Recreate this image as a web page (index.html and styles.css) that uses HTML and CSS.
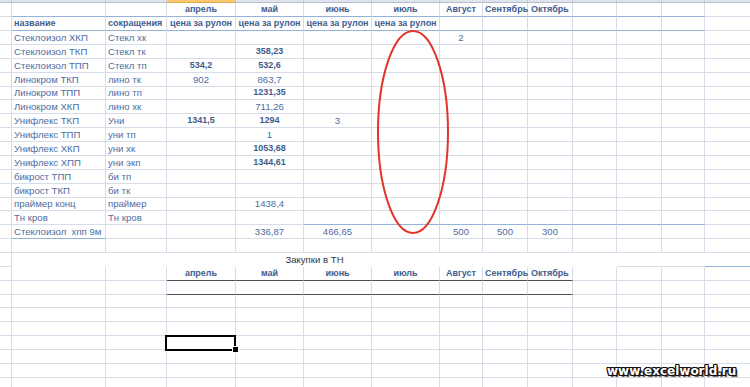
FILE: index.html
```html
<!DOCTYPE html>
<html lang="ru">
<head>
<meta charset="utf-8">
<title>Лист</title>
<link rel="stylesheet" href="styles.css">
</head>
<body>
<div class="sheet">
  <div class="row hdr"><div class="h"></div><div class="h"></div><div class="h"></div><div class="h sel"></div><div class="h"></div><div class="h"></div><div class="h"></div><div class="h"></div><div class="h"></div><div class="h"></div><div class="h"></div><div class="h"></div><div class="h"></div><div class="h"></div></div>

  <div class="row first"><div class="c"></div><div class="c bb"></div><div class="c bb"></div><div class="c bb b m">апрель</div><div class="c bb b m">май</div><div class="c bb b m">июнь</div><div class="c bb b m">июль</div><div class="c bb b m">Август</div><div class="c bb b m">Сентябрь</div><div class="c bb b m">Октябрь</div><div class="c bb"></div><div class="c bb"></div><div class="c bb"></div><div class="c"></div></div>

  <div class="row"><div class="c"></div><div class="c bb b">название</div><div class="c bb b">сокращения</div><div class="c bb b m">цена за рулон</div><div class="c bb b m">цена за рулон</div><div class="c bb b m">цена за рулон</div><div class="c bb b m">цена за рулон</div><div class="c bb"></div><div class="c bb"></div><div class="c bb"></div><div class="c bb"></div><div class="c bb"></div><div class="c bb"></div><div class="c"></div></div>

  <div class="row"><div class="c"></div><div class="c">Стеклоизол ХКП</div><div class="c">Стекл хк</div><div class="c"></div><div class="c"></div><div class="c"></div><div class="c"></div><div class="c m">2</div><div class="c"></div><div class="c"></div><div class="c"></div><div class="c"></div><div class="c"></div><div class="c"></div></div>

  <div class="row"><div class="c"></div><div class="c">Стеклоизол ТКП</div><div class="c">Стекл тк</div><div class="c"></div><div class="c b m">358,23</div><div class="c"></div><div class="c"></div><div class="c"></div><div class="c"></div><div class="c"></div><div class="c"></div><div class="c"></div><div class="c"></div><div class="c"></div></div>

  <div class="row"><div class="c"></div><div class="c">Стеклоизол ТПП</div><div class="c">Стекл тп</div><div class="c b m">534,2</div><div class="c b m">532,6</div><div class="c"></div><div class="c"></div><div class="c"></div><div class="c"></div><div class="c"></div><div class="c"></div><div class="c"></div><div class="c"></div><div class="c"></div></div>

  <div class="row"><div class="c"></div><div class="c">Линокром ТКП</div><div class="c">лино тк</div><div class="c m">902</div><div class="c m">863,7</div><div class="c"></div><div class="c"></div><div class="c"></div><div class="c"></div><div class="c"></div><div class="c"></div><div class="c"></div><div class="c"></div><div class="c"></div></div>

  <div class="row"><div class="c"></div><div class="c">Линокром ТПП</div><div class="c">лино тп</div><div class="c"></div><div class="c b m">1231,35</div><div class="c"></div><div class="c"></div><div class="c"></div><div class="c"></div><div class="c"></div><div class="c"></div><div class="c"></div><div class="c"></div><div class="c"></div></div>

  <div class="row"><div class="c"></div><div class="c">Линокром ХКП</div><div class="c">лино хк</div><div class="c"></div><div class="c m">711,26</div><div class="c"></div><div class="c"></div><div class="c"></div><div class="c"></div><div class="c"></div><div class="c"></div><div class="c"></div><div class="c"></div><div class="c"></div></div>

  <div class="row"><div class="c"></div><div class="c">Унифлекс ТКП</div><div class="c">Уни</div><div class="c b m">1341,5</div><div class="c b m">1294</div><div class="c m">3</div><div class="c"></div><div class="c"></div><div class="c"></div><div class="c"></div><div class="c"></div><div class="c"></div><div class="c"></div><div class="c"></div></div>

  <div class="row"><div class="c"></div><div class="c">Унифлекс ТПП</div><div class="c">уни тп</div><div class="c"></div><div class="c m">1</div><div class="c"></div><div class="c"></div><div class="c"></div><div class="c"></div><div class="c"></div><div class="c"></div><div class="c"></div><div class="c"></div><div class="c"></div></div>

  <div class="row"><div class="c"></div><div class="c">Унифлекс ХКП</div><div class="c">уни хк</div><div class="c"></div><div class="c b m">1053,68</div><div class="c"></div><div class="c"></div><div class="c"></div><div class="c"></div><div class="c"></div><div class="c"></div><div class="c"></div><div class="c"></div><div class="c"></div></div>

  <div class="row"><div class="c"></div><div class="c">Унифлекс ХПП</div><div class="c">уни экп</div><div class="c"></div><div class="c b m">1344,61</div><div class="c"></div><div class="c"></div><div class="c"></div><div class="c"></div><div class="c"></div><div class="c"></div><div class="c"></div><div class="c"></div><div class="c"></div></div>

  <div class="row"><div class="c"></div><div class="c">бикрост ТПП</div><div class="c">би тп</div><div class="c"></div><div class="c"></div><div class="c"></div><div class="c"></div><div class="c"></div><div class="c"></div><div class="c"></div><div class="c"></div><div class="c"></div><div class="c"></div><div class="c"></div></div>

  <div class="row"><div class="c"></div><div class="c">бикрост ТКП</div><div class="c">би тк</div><div class="c"></div><div class="c"></div><div class="c"></div><div class="c"></div><div class="c"></div><div class="c"></div><div class="c"></div><div class="c"></div><div class="c"></div><div class="c"></div><div class="c"></div></div>

  <div class="row"><div class="c"></div><div class="c">праймер конц</div><div class="c">праймер</div><div class="c"></div><div class="c m">1438,4</div><div class="c"></div><div class="c"></div><div class="c"></div><div class="c"></div><div class="c"></div><div class="c"></div><div class="c"></div><div class="c"></div><div class="c"></div></div>

  <div class="row"><div class="c"></div><div class="c">Тн кров</div><div class="c">Тн кров</div><div class="c"></div><div class="c"></div><div class="c bb"></div><div class="c bb"></div><div class="c bb"></div><div class="c bb"></div><div class="c bb"></div><div class="c bb"></div><div class="c bb"></div><div class="c bb"></div><div class="c"></div></div>

  <div class="row"><div class="c"></div><div class="c bb">Стеклоизол  хпп 9м</div><div class="c"></div><div class="c"></div><div class="c m">336,87</div><div class="c m">466,65</div><div class="c"></div><div class="c m">500</div><div class="c m">500</div><div class="c m">300</div><div class="c"></div><div class="c"></div><div class="c"></div><div class="c"></div></div>

  <div class="row"><div class="c"></div><div class="c"></div><div class="c"></div><div class="c"></div><div class="c"></div><div class="c"></div><div class="c"></div><div class="c"></div><div class="c"></div><div class="c"></div><div class="c"></div><div class="c"></div><div class="c"></div><div class="c"></div></div>

  <div class="row"><div class="c"></div><div class="c nr"></div><div class="c nr"></div><div class="c nr bb"></div><div class="c nr bb"></div><div class="c nr bb"></div><div class="c nr bb"></div><div class="c nr bb"></div><div class="c nr bb"></div><div class="c nr bb"></div><div class="c"></div><div class="c"></div><div class="c"></div><div class="c"></div><div class="title">Закупки в ТН</div></div>

  <div class="row"><div class="c"></div><div class="c"></div><div class="c"></div><div class="c bd b m">апрель</div><div class="c bd b m">май</div><div class="c bd b m">июнь</div><div class="c bd b m">июль</div><div class="c bd b m">Август</div><div class="c bd b m">Сентябрь</div><div class="c bd b m">Октябрь</div><div class="c"></div><div class="c"></div><div class="c"></div><div class="c"></div></div>

  <div class="row"><div class="c"></div><div class="c"></div><div class="c"></div><div class="c bd"></div><div class="c bd"></div><div class="c bd"></div><div class="c bd"></div><div class="c bd"></div><div class="c bd"></div><div class="c bd"></div><div class="c"></div><div class="c"></div><div class="c"></div><div class="c"></div></div>

  <div class="row"><div class="c"></div><div class="c"></div><div class="c"></div><div class="c"></div><div class="c"></div><div class="c"></div><div class="c"></div><div class="c"></div><div class="c"></div><div class="c"></div><div class="c"></div><div class="c"></div><div class="c"></div><div class="c"></div></div>

  <div class="row"><div class="c"></div><div class="c"></div><div class="c"></div><div class="c"></div><div class="c"></div><div class="c"></div><div class="c"></div><div class="c"></div><div class="c"></div><div class="c"></div><div class="c"></div><div class="c"></div><div class="c"></div><div class="c"></div></div>

  <div class="row"><div class="c"></div><div class="c"></div><div class="c"></div><div class="c"></div><div class="c"></div><div class="c"></div><div class="c"></div><div class="c"></div><div class="c"></div><div class="c"></div><div class="c"></div><div class="c"></div><div class="c"></div><div class="c"></div></div>

  <div class="row"><div class="c"></div><div class="c"></div><div class="c"></div><div class="c active"></div><div class="c"></div><div class="c"></div><div class="c"></div><div class="c"></div><div class="c"></div><div class="c"></div><div class="c"></div><div class="c"></div><div class="c"></div><div class="c"></div></div>

  <div class="row"><div class="c"></div><div class="c"></div><div class="c"></div><div class="c"></div><div class="c"></div><div class="c"></div><div class="c"></div><div class="c"></div><div class="c"></div><div class="c"></div><div class="c"></div><div class="c"></div><div class="c"></div><div class="c"></div></div>

  <div class="row"><div class="c"></div><div class="c"></div><div class="c"></div><div class="c"></div><div class="c"></div><div class="c"></div><div class="c"></div><div class="c"></div><div class="c"></div><div class="c"></div><div class="c"></div><div class="c"></div><div class="c"></div><div class="c"></div></div>

  <div class="row"><div class="c"></div><div class="c"></div><div class="c"></div><div class="c"></div><div class="c"></div><div class="c"></div><div class="c"></div><div class="c"></div><div class="c"></div><div class="c"></div><div class="c"></div><div class="c"></div><div class="c"></div><div class="c"></div></div>

  <svg class="mark" width="750" height="387" viewBox="0 0 750 387" aria-hidden="true">
    <ellipse cx="413" cy="132" rx="35" ry="101" fill="none" stroke="#e3342a" stroke-width="2"/>
  </svg>

  <div class="wm">www.excelworld.ru</div>
</div>
</body>
</html>
```

FILE: styles.css
```css
* { box-sizing: border-box; }

html, body {
  margin: 0;
  padding: 0;
  background: #ffffff;
}

body {
  width: 750px;
  height: 387px;
  overflow: hidden;
  font-family: "Liberation Sans", Arial, sans-serif;
  font-size: 9.6px;
  color: #4f6d9e;
}

.sheet {
  position: relative;
  display: flex;
  flex-direction: column;
  width: 750px;
  height: 387px;
  overflow: hidden;
}

.row {
  display: grid;
  grid-template-columns: 12px 94px 61px 69px 68px 68px 68px 43px 45px 45px 44px 45px 43px 60px;
  height: 13.88px;
  flex: none;
}

.row.first { height: 14px; }

.row.hdr { height: 3px; }

.h {
  background: #dfe4ec;
  border-right: 1px solid #c4ccd8;
  border-bottom: 1px solid #b4bfcf;
}

.h.sel {
  background: #f7c870;
  border-bottom-color: #e2a94a;
}

.c {
  grid-row: 1;
  border-right: 1px solid #d6dde8;
  border-bottom: 1px solid #d6dde8;
  padding: 0 2px;
  line-height: 13px;
  white-space: pre;
  overflow: visible;
}

.b {
  font-weight: bold;
  font-size: 9px;
  color: #3f5d8e;
}

.m { text-align: center; }

.bb { border-bottom-color: #95b3d7; }

.bd { border-bottom-color: #505050; }

.nr { border-right-color: transparent; }

.title {
  grid-row: 1;
  grid-column: 2 / 12;
  text-align: center;
  line-height: 13px;
  color: #353535;
  white-space: pre;
}

.active { position: relative; }

.active::after {
  content: "";
  position: absolute;
  top: -1px;
  left: -2px;
  right: -1px;
  bottom: -2px;
  border: 2px solid #000000;
}

.active::before {
  content: "";
  position: absolute;
  right: -4px;
  bottom: -4px;
  width: 5px;
  height: 5px;
  background: #000000;
  border: 1px solid #ffffff;
  z-index: 1;
}

.mark {
  position: absolute;
  left: 0;
  top: 0;
  pointer-events: none;
}

.wm {
  position: absolute;
  left: 607px;
  top: 364px;
  font-family: "DejaVu Sans", "Liberation Sans", sans-serif;
  font-weight: bold;
  font-size: 12px;
  line-height: 14px;
  color: #ffffff;
  text-shadow:
    1px 0 0 #111, -1px 0 0 #111, 0 1px 0 #111, 0 -1px 0 #111,
    1px 1px 0 #111, -1px -1px 0 #111, 1px -1px 0 #111, -1px 1px 0 #111,
    2px 2px 1px #444;
}
```
